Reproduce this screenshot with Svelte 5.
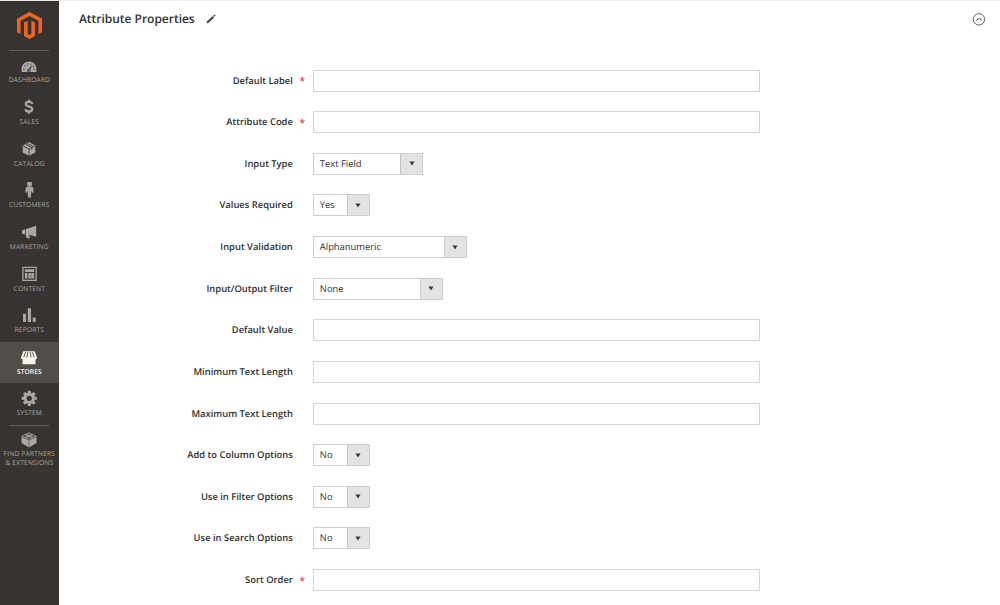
<script>
  const menu = [
    { id: 'dashboard', label: 'DASHBOARD' },
    { id: 'sales', label: 'SALES' },
    { id: 'catalog', label: 'CATALOG' },
    { id: 'customers', label: 'CUSTOMERS' },
    { id: 'marketing', label: 'MARKETING' },
    { id: 'content', label: 'CONTENT' },
    { id: 'reports', label: 'REPORTS' },
    { id: 'stores', label: 'STORES', active: true },
    { id: 'system', label: 'SYSTEM' },
    { id: 'partners', label: 'FIND PARTNERS & EXTENSIONS' },
  ];
  const fields = [
    { label: 'Default Label', required: true },
    { label: 'Attribute Code', required: true },
    { label: 'Input Type', value: 'Text Field', width: 110.3 },
    { label: 'Values Required', value: 'Yes', width: 57 },
    { label: 'Input Validation', value: 'Alphanumeric', width: 154 },
    { label: 'Input/Output Filter', value: 'None', width: 130 },
    { label: 'Default Value' },
    { label: 'Minimum Text Length' },
    { label: 'Maximum Text Length' },
    { label: 'Add to Column Options', value: 'No', width: 57 },
    { label: 'Use in Filter Options', value: 'No', width: 57 },
    { label: 'Use in Search Options', value: 'No', width: 57 },
    { label: 'Sort Order', required: true },
  ];
</script>

{#snippet icon(id)}
  <svg class="icon" viewBox="0 0 20 18" width="20" height="18" fill="currentColor">
    {#if id === 'dashboard'}
      <path d="M2.6 15V11.800a7.400 7.400 0 0 1 14.800 0v3.200z" />
      <g fill="var(--bg)" transform="translate(0 .8)"><circle cx="4.800" cy="11.300" r=".65" /><circle cx="6" cy="8.200" r=".65" /><circle cx="8.600" cy="6.200" r=".65" /><circle cx="11.700" cy="6.200" r=".55" /><circle cx="15.200" cy="11.300" r=".65" /><circle cx="14.600" cy="8.600" r=".6" /><path d="M13.400 6.800l-2.100 5.100a1.600 1.600 0 1 1-1.500-1z" /></g>
      <circle cx="10" cy="12.900" r=".7" />
    {:else if id === 'sales'}
      <path d="M13.400 5.800C12.900 4.500 11.900 3.900 10 3.900S6.800 4.700 6.800 6c0 3.500 6.500 1.700 6.500 5 0 1.600-1.400 2.500-3.300 2.500-2.200 0-3.300-.9-3.600-2.300M10 1.700v2.300M10 13.400v2.300" fill="none" stroke="currentColor" stroke-width="2.300" />
    {:else if id === 'catalog'}
      <path d="M3.700 5.500L10 2l6.300 3.500v6.900L10 15.800l-6.300-3.400z" />
      <path d="M4 5.900l6 3 6-3M10 8.900v6.700M6.700 4.200l6.200 3.200v2.500M8.200 3.400L14 6.300" fill="none" stroke="var(--bg)" stroke-width=".8" />
    {:else if id === 'customers'}
      <g transform="translate(.2 -1.500)">
        <circle cx="10.300" cy="3.400" r="2.500" />
        <path d="M8.300 6.100h4c1.200 0 1.700 1 1.800 2l.3 4-1.300.2-.8-2-.7 6.900H9L8.300 10.300l-.8 2-1.300-.2.300-4c.1-1 .7-2 1.800-2z" />
      </g>
    {:else if id === 'marketing'}
      <path d="M17.200 2.800v10.900l-7-1.900.7 3.400H7.700L6.400 11.500 3 10.700V7.200l3.500-.9z" />
      <path d="M6.500 5.800v6.200" stroke="var(--bg)" stroke-width=".6" />
    {:else if id === 'content'}
      <g transform="translate(.5 -.7)">
        <path d="M3.400 3h13.200v13H3.400z" fill="none" stroke="currentColor" stroke-width="1.300" />
        <path d="M5.400 5h9.200v2.700H5.400zM5.400 8.700h2.500v5.500H5.400zM8.900 8.700h5.700v5.500H8.900z" />
        <path d="M11.500 8.700v5.500" stroke="var(--bg)" stroke-width=".45" />
      </g>
    {:else if id === 'reports'}
      <path transform="translate(.3 -.6)" d="M3.700 8.300h3v8.200h-3zM8.500 2.800h3.200v13.700H8.500zM13.400 12h3v4.500h-3z" />
    {:else if id === 'stores'}
      <path d="M4.300 3.200h11.400l2.300 6.300c0 1-.5 1.600-1.500 1.700v5.100h-13v-5.100c-1 0-1.500-.7-1.500-1.700z" />
      <path d="M6.500 4.100L4.900 9.300M8.800 4.100L8 9.300M11.200 4.100l.8 5.200M13.500 4.100l1.600 5.200" stroke="var(--bg)" stroke-width=".95" />
    {:else if id === 'system'}
      <g transform="translate(10.300 8.300)">
        <path fill-rule="evenodd" d="M0-5.600a5.600 5.600 0 1 0 0 11.200A5.600 5.600 0 0 0 0-5.600zM0-2.600a2.600 2.600 0 1 1 0 5.200 2.600 2.600 0 0 1 0-5.200z" />
        {#each [0, 45, 90, 135, 180, 225, 270, 315] as a}
          <path d="M-1.800-5l.4-2.600h2.800L1.800-5z" transform="rotate({a})" />
        {/each}
      </g>
    {:else}
      <path d="M2.500 6L10 2.300 17.500 6v7L10 17.400 2.500 13z" />
      <path d="M2.700 6.600L10 10.200l7.300-3.600M10 10.200v7" stroke="var(--bg)" stroke-width=".5" fill="none" />
      <g fill="none" stroke="var(--bg)" stroke-width=".75"><ellipse cx="10" cy="4.200" rx="1.700" ry=".7" /><ellipse cx="6.200" cy="6.200" rx="1.700" ry=".7" /><ellipse cx="13.800" cy="6.200" rx="1.700" ry=".7" /><ellipse cx="10" cy="8.100" rx="1.700" ry=".7" /></g>
    {/if}
  </svg>
{/snippet}

<div class="page">
  <nav>
    <div class="logo">
      <svg viewBox="0 0 24 27" width="25" height="27" preserveAspectRatio="none" fill="#f26322">
        <path d="M12 0L0 6.700v13.500l3.400 1.900V8.700L12 3.900l8.600 4.800v13.400l3.400-1.900V6.700z" />
        <path d="M6.800 10.600l3.400-1.900V22l1.800 1 1.800-1V8.700l3.400 1.900V24L12 27l-5.200-3z" />
      </svg>
    </div>
    {#each menu as item}
      <div class="item {item.id}" class:active={item.active}>
        {@render icon(item.id)}
        <span>{item.label}</span>
      </div>
    {/each}
  </nav>
  <main>
    <header>
      <h1>Attribute Properties</h1>
      <svg class="pencil" viewBox="0 0 10 10" width="10" height="10"><path d="M.4 9.600l.8-2.500 5.600-5.200 1.500 1.500L2.800 8.700zM7.300 1.500L8.500.4l1.100 1.100-.9 1.200z" fill="#514943" /></svg>
      <svg class="toggle" viewBox="0 0 14 14" width="14" height="14" fill="none" stroke="#514943"><circle cx="7" cy="7.300" r="5.700" stroke-width=".85" /><path d="M4.200 8.200L7 6.500l2.800 1.700" stroke-width="1" /></svg>
    </header>
    <form>
      {#each fields as f}
        <div class="field">
          <label for={f.label}>{f.label}</label>
          <span class="star">{f.required ? '*' : ''}</span>
          {#if f.value}
            <div class="select" id={f.label} style="width: {f.width}px">
              <span>{f.value}</span>
              <i><svg viewBox="0 0 6 5" width="6" height="5"><path d="M.4.500h5.200L3 4.400z" fill="#41362f" /></svg></i>
            </div>
          {:else}
            <input id={f.label} type="text" />
          {/if}
        </div>
      {/each}
    </form>
  </main>
</div>

<style>
  :global(body) { margin: 0; background: #fff; overflow: hidden; }
  .page { display: flex; height: 605px; box-sizing: border-box; border-top: 1px solid #ededed; font-family: 'Open Sans', sans-serif; color: #303030; overflow: hidden; text-rendering: geometricPrecision; }
  nav { --bg: #373330; width: 58.670px; margin-top: -1px; border-top: 1px solid #777472; background: var(--bg); flex: none; box-sizing: border-box; height: 605px; }
  .logo { height: 49.300px; display: flex; justify-content: center; padding: 11px 0 0 .6px; box-sizing: border-box; }
  .item { height: 41.640px; box-sizing: border-box; display: flex; flex-direction: column; align-items: center; padding-top: 6.400px; color: #aaa6a0; position: relative; }
  .item.active { --bg: #524d49; background: var(--bg); color: #f7f3eb; }
  .item span { font-size: 6.670px; line-height: 9px; letter-spacing: .17px; font-weight: 400; text-align: center; margin-top: .8px; }
  .item.active span { font-weight: 600; letter-spacing: .05px; }
  .icon { display: block; flex: none; }
  .dashboard::before, .partners::before { content: ''; position: absolute; top: 0; left: 9px; width: 40px; height: 1px; background: #625e5a; }
  .partners { padding-top: 5.200px; }
  .partners span { width: 58px; }
  main { flex: 1; }
  header { display: flex; align-items: center; height: 36px; padding: 0 14px 0 20.300px; }
  h1 { font-size: 12px; font-weight: 600; margin: 0; line-height: 16px; letter-spacing: -.02px; }
  .pencil { margin-left: 11px; }
  .toggle { margin-left: auto; }
  form { padding-top: 22.700px; }
  .field { display: flex; height: 41.640px; align-items: center; }
  label { width: 234.200px; text-align: right; font-size: 9.400px; font-weight: 600; line-height: 14px; }
  .star { width: 19px; text-align: center; color: #e22626; font-size: 11px; font-weight: 400; line-height: 14px; margin-right: 1px; padding-top: 3px; box-sizing: border-box; }
  input { width: 447.500px; height: 22px; box-sizing: border-box; border: 1px solid #d6d6d6; border-radius: .7px; padding: 0 7px; margin: 0; font: 9.330px 'Open Sans', sans-serif; background: #fff; }
  .select { height: 22px; box-sizing: border-box; border: 1px solid #cfcfcf; display: flex; font-size: 9.400px; line-height: 19px; color: #303030; }
  .select span { flex: 1; padding-left: 6px; }
  .select i { width: 21px; background: #e3e3e3; border-left: 1px solid #c4c4c4; display: flex; align-items: center; justify-content: center; }
</style>
